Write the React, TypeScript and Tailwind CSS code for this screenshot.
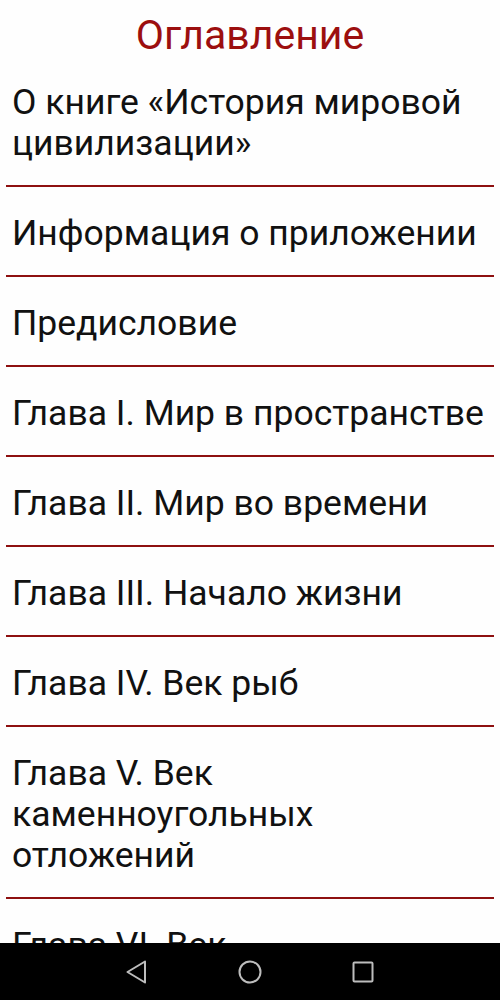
const chapters = [
  "О книге «История мировой цивилизации»",
  "Информация о приложении",
  "Предисловие",
  "Глава I. Мир в пространстве",
  "Глава II. Мир во времени",
  "Глава III. Начало жизни",
  "Глава IV. Век рыб",
  "Глава V. Век каменноугольных отложений",
  "Глава VI. Век пресмыкающихся",
  "Глава VII. Первые птицы и первые млекопитающие",
];

function NavBar() {
  return (
    <nav className="flex h-[57px] shrink-0 items-center justify-center gap-[89px] bg-black">
      <svg width="24" height="24" viewBox="0 0 24 24" className="text-[#bdbdbd]">
        <path d="M20 1.5 L2.5 12 L20 22.5 Z" fill="none" stroke="currentColor" strokeWidth="2" strokeLinejoin="round" />
      </svg>
      <svg width="24" height="24" viewBox="0 0 24 24" className="text-[#bdbdbd]">
        <circle cx="12" cy="12" r="10.5" fill="none" stroke="currentColor" strokeWidth="2" />
      </svg>
      <svg width="24" height="24" viewBox="0 0 24 24" className="text-[#bdbdbd]">
        <rect x="2.5" y="2.5" width="19" height="19" rx="1" fill="none" stroke="currentColor" strokeWidth="2" />
      </svg>
    </nav>
  );
}

export default function App() {
  return (
    <div className="flex h-[1000px] w-[500px] flex-col bg-[#fefefe] font-['Roboto',sans-serif]">
      <main className="flex-1 overflow-hidden">
        <h1 className="pt-[14px] text-center text-[41px] leading-[42px] text-[#9c0f0f]">
          Оглавление
        </h1>
        <ul className="px-[6px]">
          {chapters.map((title) => (
            <li
              key={title}
              className="border-b-[2px] border-[#8e1010] pl-[6px] pr-1 pt-[26px] pb-[21px] text-[35.5px] leading-[41px] text-[#111]"
            >
              {title}
            </li>
          ))}
        </ul>
      </main>
      <NavBar />
    </div>
  );
}
